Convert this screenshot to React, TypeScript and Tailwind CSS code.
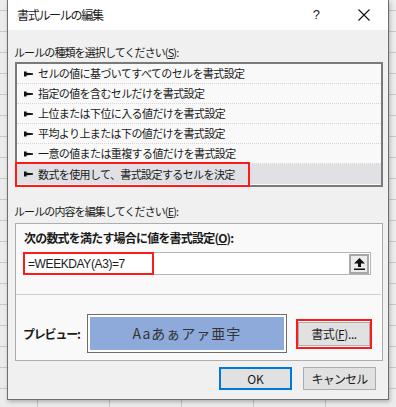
import React from "react";

const rules = [
	"セルの値に基づいてすべてのセルを書式設定",
	"指定の値を含むセルだけを書式設定",
	"上位または下位に入る値だけを書式設定",
	"平均より上または下の値だけを書式設定",
	"一意の値または重複する値だけを書式設定",
	"数式を使用して、書式設定するセルを決定",
];

function RuleArrow() {
	return (
		<svg width="9" height="6" viewBox="0 0 9 6" className="shrink-0">
			<rect x="0" y="0.5" width="2.5" height="5" fill="#111" />
			<polygon points="0,1.5 9,2.3 9,3.7 0,4.5" fill="#111" />
		</svg>
	);
}

function UpIcon() {
	return (
		<svg width="11" height="12" viewBox="0 0 11 12">
			<polygon points="5.5,0 11,5.5 7,5.5 7,9 4,9 4,5.5 0,5.5" fill="#111" />
			<rect x="0" y="10.5" width="11" height="1.5" fill="#111" />
		</svg>
	);
}

export default function App() {
	return (
		<div className="relative w-[396px] h-[407px] overflow-hidden bg-[#ececec] bg-[linear-gradient(#c9c9c9_1px,transparent_1px),linear-gradient(90deg,#c9c9c9_1px,transparent_1px)] bg-[size:72px_21px] bg-[position:37px_10px] font-['Noto_Sans_CJK_JP',sans-serif] text-[#1a1a1a]">
			<div className="ml-[7px] w-[382px] h-[400px] flex flex-col border-x border-b border-[#6e6e6e] shadow-[1px_2px_4px_rgba(0,0,0,0.25)]">
				{/* title bar */}
				<div className="h-[30px] bg-white flex items-center pl-[9px] shrink-0">
					<span className="text-[12px] tracking-[-1.3px]">書式ルールの編集</span>
					<span className="ml-auto text-[13px] font-['Liberation_Sans',sans-serif] mr-[38px]">?</span>
					<svg width="12" height="12" viewBox="0 0 12 12" className="mr-[18px]">
						<path d="M0.5 0.5 L11.5 11.5 M11.5 0.5 L0.5 11.5" stroke="#111" strokeWidth="1.1" />
					</svg>
				</div>

				<div className="flex-1 bg-[#f0f0f0] pl-[7px] pr-[5px] flex flex-col">
					<div className="mt-[14px] h-[16px] leading-[16px] text-[11px] tracking-[-0.9px] -ml-[1px]">
						ルールの種類を選択してください(<span className="underline">S</span>):
					</div>

					{/* rule type list */}
					<div className="relative mt-[2px] h-[125px] border-2 border-[#7a7a7a] bg-[#f9f9f9]">
						{rules.map((rule, i) => (
							<div
								key={rule}
								className={
									"h-[20px] flex items-center gap-[5px] pl-[7px] text-[11px] tracking-[-0.6px] " +
									(i === 5
										? "bg-[#e0e0e5]"
										: "border-b border-dotted border-[#d9d4d4]")
								}
							>
								<RuleArrow />
								<span>{rule}</span>
							</div>
						))}
						<div className="absolute left-[-2px] top-[98px] w-[235px] h-[25px] border-2 border-[#ff1a1a]" />
					</div>

					<div className="mt-[16px] h-[16px] leading-[16px] text-[11px] tracking-[-0.9px] -ml-[1px]">
						ルールの内容を編集してください(<span className="underline">E</span>):
					</div>

					{/* rule description */}
					<div className="mt-[4px] h-[138px] border border-[#adadad] bg-[#f9f9f9] flex flex-col">
						<div className="mt-[6px] h-[16px] leading-[16px] pl-[8px] text-[12px] font-bold tracking-[-0.8px]">
							次の数式を満たす場合に値を書式設定(<span className="underline">O</span>):
						</div>
						<div className="mt-[6px] ml-[7px] mr-[11px] h-[23px] border border-[#b4b4b4] bg-white relative flex items-center">
							<span className="pl-[4px] text-[12px] font-['Liberation_Sans',sans-serif] tracking-[-0.4px]">
								=WEEKDAY(A3)=7
							</span>
							<div className="ml-auto mr-[1px] w-[20px] h-[20px] border-2 border-[#a9a9a9] bg-[#ececec] flex items-center justify-center">
								<UpIcon />
							</div>
							<div className="absolute left-[-1px] top-[-1px] w-[131px] h-[23px] border-2 border-[#ff1a1a]" />
						</div>
						<div className="mt-[19px] h-px bg-[#cfcfcf] mr-[1px]" />
						<div className="mt-[19px] flex items-center pl-[7px]">
							<span className="w-[64px] text-[12px] font-bold tracking-[-1.2px]">プレビュー:</span>
							<div className="w-[200px] h-[39px] border border-[#6d6d6d] bg-white p-[2px]">
								<div className="h-full bg-[#8eaadb] flex items-center justify-center text-[14px] tracking-[1px] text-[#333]">
									Aaあぁアァ亜宇
								</div>
							</div>
							<div className="ml-[9px] w-[76px] h-[30px] border-2 border-[#ff1a1a] flex items-center justify-center">
								<div className="w-[72px] h-[24px] border border-[#adadad] bg-[#e1e1e1] flex items-center justify-center text-[12px] tracking-[-0.4px]">
									書式(<span className="underline">F</span>)...
								</div>
							</div>
						</div>
					</div>

					{/* buttons */}
					<div className="mt-[6px] flex justify-end gap-[11px] pr-[7px]">
						<button className="w-[73px] h-[23px] border-2 border-[#0078d7] bg-[#e1e1e1] text-[12px] flex items-center justify-center">
							OK
						</button>
						<button className="w-[73px] h-[23px] border border-[#adadad] bg-[#e1e1e1] text-[12px] tracking-[-0.8px] flex items-center justify-center">
							キャンセル
						</button>
					</div>
				</div>
			</div>
		</div>
	);
}
